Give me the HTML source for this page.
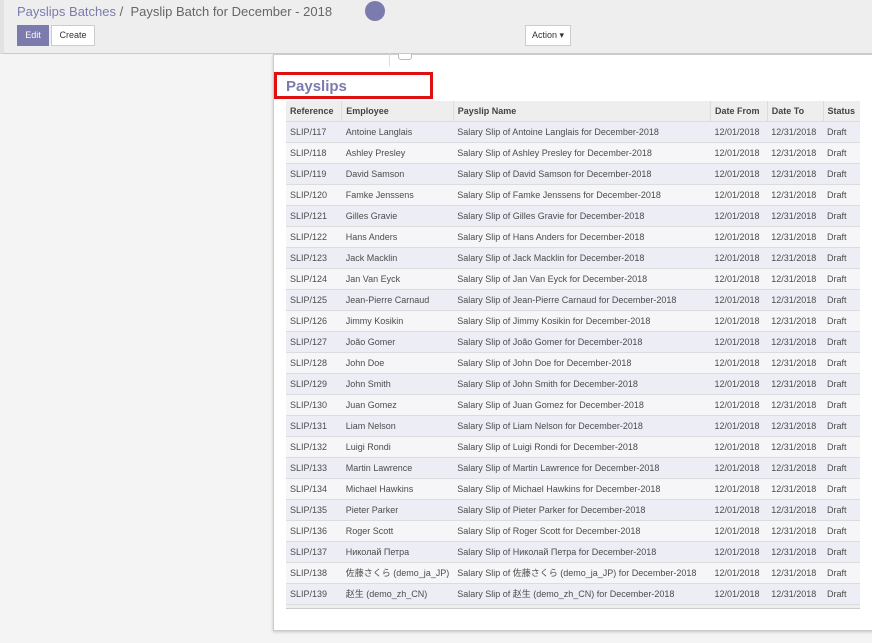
<!DOCTYPE html>
<html><head><meta charset="utf-8"><style>
*{box-sizing:border-box;margin:0;padding:0}
body{width:872px;height:643px;overflow:hidden;background:#f4f4f4;font-family:"Liberation Sans","Noto Sans CJK JP",sans-serif;font-size:9px;color:#4c4c4c;position:relative}
.top{position:absolute;left:0;top:0;width:872px;height:54px;background:#efeeee;border-bottom:1px solid #c9c9c9;border-left:4px solid #e2e2e2;z-index:2}
.bc{position:absolute;left:13px;top:4px;font-size:13px;color:#666}
.bc a{color:#7c7bad}
.dot{position:absolute;left:361px;top:1px;width:20px;height:20px;border-radius:50%;background:#7c7bad}
.btn{position:absolute;top:25px;height:21px;font-size:9px;line-height:19px;text-align:center;border:1px solid #ccc;background:#fff;color:#333}
.sheet{position:absolute;left:273px;top:54px;width:610px;height:577px;background:#fff;border:1px solid #ccc;box-shadow:0 1px 3px rgba(0,0,0,.2)}
table{position:absolute;left:286px;top:101px;border-collapse:collapse;width:574px}
td,th{height:21px;line-height:12px;padding:0 4px;text-align:left;white-space:nowrap;border-top:1px solid #dcdcdc}
th{background:#eeeeee;font-weight:bold;color:#444;border-top:none;height:20px}
th+th{border-left:1px solid #ddd}
tr:nth-child(odd) td{background:#edeef5}
tr:nth-child(even) td{background:#f6f6f9}
</style></head><body>
<div class="top">
<div class="bc"><a>Payslips Batches</a> / &nbsp;Payslip Batch for December - 2018</div>
<div class="dot"></div>
<div class="btn" style="left:13px;width:32px;background:#7c7bad;color:#fff;border-color:#7c7bad">Edit</div>
<div class="btn" style="left:47px;width:44px">Create</div>
<div class="btn" style="left:521px;width:46px">Action ▾</div>
</div>
<div class="sheet"></div>
<div style="position:absolute;left:389px;top:54px;width:1px;height:12px;background:#ddd"></div>
<div style="position:absolute;left:398px;top:48px;width:14px;height:12px;border:1px solid #bbb;border-radius:3px;background:#fff"></div>
<div style="position:absolute;left:274px;top:72px;width:159px;height:27px;border:3px solid #e01010"></div>
<div style="position:absolute;left:286px;top:78px;font-size:15px;font-weight:bold;color:#7c7bad">Payslips</div>
<table>
<colgroup><col style="width:56px"><col style="width:110px"><col style="width:258px"><col style="width:57px"><col style="width:56px"><col style="width:37px"></colgroup>
<thead><tr><th>Reference</th><th>Employee</th><th>Payslip Name</th><th>Date From</th><th>Date To</th><th>Status</th></tr></thead>
<tbody>
<tr><td>SLIP/117</td><td>Antoine Langlais</td><td>Salary Slip of Antoine Langlais for December-2018</td><td>12/01/2018</td><td>12/31/2018</td><td>Draft</td></tr>
<tr><td>SLIP/118</td><td>Ashley Presley</td><td>Salary Slip of Ashley Presley for December-2018</td><td>12/01/2018</td><td>12/31/2018</td><td>Draft</td></tr>
<tr><td>SLIP/119</td><td>David Samson</td><td>Salary Slip of David Samson for December-2018</td><td>12/01/2018</td><td>12/31/2018</td><td>Draft</td></tr>
<tr><td>SLIP/120</td><td>Famke Jenssens</td><td>Salary Slip of Famke Jenssens for December-2018</td><td>12/01/2018</td><td>12/31/2018</td><td>Draft</td></tr>
<tr><td>SLIP/121</td><td>Gilles Gravie</td><td>Salary Slip of Gilles Gravie for December-2018</td><td>12/01/2018</td><td>12/31/2018</td><td>Draft</td></tr>
<tr><td>SLIP/122</td><td>Hans Anders</td><td>Salary Slip of Hans Anders for December-2018</td><td>12/01/2018</td><td>12/31/2018</td><td>Draft</td></tr>
<tr><td>SLIP/123</td><td>Jack Macklin</td><td>Salary Slip of Jack Macklin for December-2018</td><td>12/01/2018</td><td>12/31/2018</td><td>Draft</td></tr>
<tr><td>SLIP/124</td><td>Jan Van Eyck</td><td>Salary Slip of Jan Van Eyck for December-2018</td><td>12/01/2018</td><td>12/31/2018</td><td>Draft</td></tr>
<tr><td>SLIP/125</td><td>Jean-Pierre Carnaud</td><td>Salary Slip of Jean-Pierre Carnaud for December-2018</td><td>12/01/2018</td><td>12/31/2018</td><td>Draft</td></tr>
<tr><td>SLIP/126</td><td>Jimmy Kosikin</td><td>Salary Slip of Jimmy Kosikin for December-2018</td><td>12/01/2018</td><td>12/31/2018</td><td>Draft</td></tr>
<tr><td>SLIP/127</td><td>João Gomer</td><td>Salary Slip of João Gomer for December-2018</td><td>12/01/2018</td><td>12/31/2018</td><td>Draft</td></tr>
<tr><td>SLIP/128</td><td>John Doe</td><td>Salary Slip of John Doe for December-2018</td><td>12/01/2018</td><td>12/31/2018</td><td>Draft</td></tr>
<tr><td>SLIP/129</td><td>John Smith</td><td>Salary Slip of John Smith for December-2018</td><td>12/01/2018</td><td>12/31/2018</td><td>Draft</td></tr>
<tr><td>SLIP/130</td><td>Juan Gomez</td><td>Salary Slip of Juan Gomez for December-2018</td><td>12/01/2018</td><td>12/31/2018</td><td>Draft</td></tr>
<tr><td>SLIP/131</td><td>Liam Nelson</td><td>Salary Slip of Liam Nelson for December-2018</td><td>12/01/2018</td><td>12/31/2018</td><td>Draft</td></tr>
<tr><td>SLIP/132</td><td>Luigi Rondi</td><td>Salary Slip of Luigi Rondi for December-2018</td><td>12/01/2018</td><td>12/31/2018</td><td>Draft</td></tr>
<tr><td>SLIP/133</td><td>Martin Lawrence</td><td>Salary Slip of Martin Lawrence for December-2018</td><td>12/01/2018</td><td>12/31/2018</td><td>Draft</td></tr>
<tr><td>SLIP/134</td><td>Michael Hawkins</td><td>Salary Slip of Michael Hawkins for December-2018</td><td>12/01/2018</td><td>12/31/2018</td><td>Draft</td></tr>
<tr><td>SLIP/135</td><td>Pieter Parker</td><td>Salary Slip of Pieter Parker for December-2018</td><td>12/01/2018</td><td>12/31/2018</td><td>Draft</td></tr>
<tr><td>SLIP/136</td><td>Roger Scott</td><td>Salary Slip of Roger Scott for December-2018</td><td>12/01/2018</td><td>12/31/2018</td><td>Draft</td></tr>
<tr><td>SLIP/137</td><td>Николай Петра</td><td>Salary Slip of Николай Петра for December-2018</td><td>12/01/2018</td><td>12/31/2018</td><td>Draft</td></tr>
<tr><td>SLIP/138</td><td>佐藤さくら (demo_ja_JP)</td><td>Salary Slip of 佐藤さくら (demo_ja_JP) for December-2018</td><td>12/01/2018</td><td>12/31/2018</td><td>Draft</td></tr>
<tr><td>SLIP/139</td><td>赵生 (demo_zh_CN)</td><td>Salary Slip of 赵生 (demo_zh_CN) for December-2018</td><td>12/01/2018</td><td>12/31/2018</td><td>Draft</td></tr>
<tr><td colspan="6" style="height:4px;background:#eeeeee;border-bottom:1px solid #ccc"></td></tr>
</tbody></table>
</body></html>
